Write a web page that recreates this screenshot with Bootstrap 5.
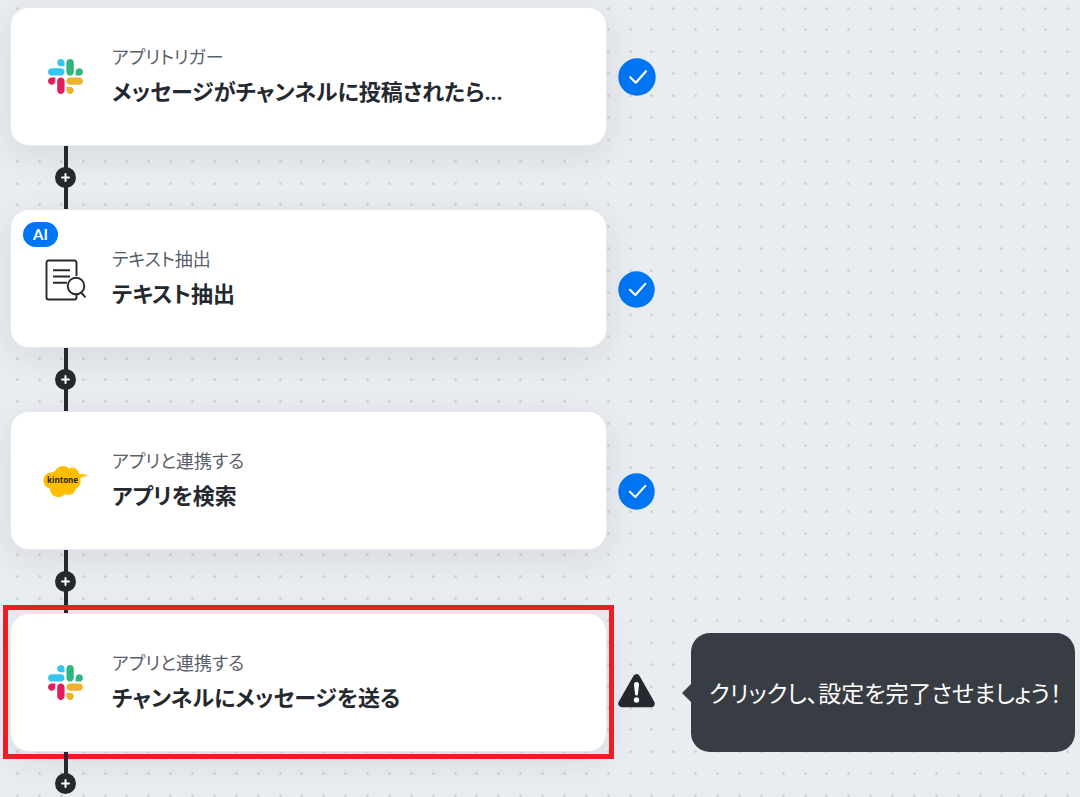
<!DOCTYPE html>
<html lang="ja">
<head>
<meta charset="utf-8">
<meta name="viewport" content="width=device-width, initial-scale=1">
<title>フロー編集</title>
<link href="https://cdn.jsdelivr.net/npm/bootstrap@5.3.0/dist/css/bootstrap.min.css" rel="stylesheet">
<style>
  :root { --ink: #24292f; --blue: #0075f2; --step-h: 139px; }
  body {
    font-family: "Noto Sans", "Noto Sans CJK JP", sans-serif;
    font-feature-settings: "palt";
    color: var(--ink);
    background-color: #e9ecf1;
    /* dot grid: eight dots per 175px tile */
    background-image: url("data:image/svg+xml,%3Csvg xmlns='http://www.w3.org/2000/svg' width='175' height='175'%3E%3Cdefs%3E%3Cpattern id='d' width='22' height='22' patternUnits='userSpaceOnUse'%3E%3Ccircle cx='11.5' cy='11.5' r='1.5' fill='%23cfd2d8'/%3E%3C/pattern%3E%3C/defs%3E%3Crect width='175' height='175' fill='url(%23d)'/%3E%3C/svg%3E");
    background-position: -60px 18px;
  }
  .flow { padding: 7px 5px 0 10px; }
  .step-card {
    flex: 0 1 597px;
    min-height: var(--step-h);
    border: 1px solid #e6e9ed;
    border-radius: 19px;
    box-shadow: 0 9px 35px rgba(36, 41, 47, .09);
    padding: 0 20px 0 31px;
  }
  .app-icon { width: 46px; }
  .step-text { margin-left: 24px; padding-bottom: 2px; }
  .step-label { font-size: 18px; line-height: 26px; color: #57606a; margin-bottom: 5px; }
  .step-title { font-size: 22px; line-height: 32px; font-weight: 600; margin-bottom: 0; }
  .ai-tag {
    position: absolute; top: 12px; left: 12px;
    width: 35px; height: 25px; line-height: 25px;
    font-family: Lato, sans-serif; font-size: 15px; font-weight: 700;
    background: var(--blue);
  }
  .focus-frame { position: absolute; inset: -9px -8px -8px -8px; border: 5px solid #ee1c25; }
  .state { width: 38px; margin-left: 11px; flex: none; }
  .state-low { padding-top: 22px; }
  .link-row { height: 63px; width: 21px; margin-left: 45px; }
  .link-row::before { content: ""; position: absolute; top: 0; bottom: 0; left: 9px; width: 4px; background: var(--ink); }
  .link-end { height: 42px; }
  .link-end::before { bottom: 16px; }
  .add-btn { width: 21px; height: 21px; background: var(--ink); }
  .hint {
    flex: 1 1 0; min-width: 0;
    margin-left: 35px; min-height: 119px; padding-left: 18px;
    border-radius: 19px; background: #383c43; color: #fff;
    font-size: 23px; line-height: 32px; top: 10px;
  }
  .hint::before {
    content: ""; position: absolute; left: -9px; top: 50%; margin-top: -9px;
    border: solid transparent; border-width: 9px 9px 9px 0; border-right-color: #383c43;
  }
</style>
</head>
<body>
<svg width="0" height="0" class="position-absolute" aria-hidden="true">
  <symbol id="slack" viewBox="0 0 122.8 122.8">
    <path fill="#e01e5a" d="M25.8 77.6c0 7.1-5.8 12.9-12.9 12.9S0 84.700 0 77.600s5.800-12.900 12.900-12.900h12.900zM32.300 77.600c0-7.100 5.800-12.900 12.900-12.900s12.900 5.800 12.900 12.900v32.300c0 7.100-5.800 12.900-12.900 12.900s-12.900-5.800-12.900-12.900z"/>
    <path fill="#36c5f0" d="M45.200 25.800c-7.100 0-12.900-5.800-12.900-12.900S38.100 0 45.200 0s12.900 5.800 12.900 12.900v12.900zM45.200 32.300c7.100 0 12.900 5.800 12.900 12.900s-5.800 12.900-12.900 12.900H12.900C5.800 58.100 0 52.300 0 45.200s5.800-12.900 12.900-12.900z"/>
    <path fill="#2eb67d" d="M97 45.200c0-7.100 5.800-12.900 12.900-12.900s12.900 5.800 12.900 12.900-5.800 12.900-12.900 12.900H97zM90.500 45.200c0 7.100-5.800 12.900-12.900 12.900s-12.900-5.800-12.900-12.900V12.900C64.700 5.800 70.500 0 77.600 0s12.900 5.800 12.900 12.900z"/>
    <path fill="#ecb22e" d="M77.600 97c7.100 0 12.900 5.800 12.900 12.900s-5.800 12.900-12.900 12.900-12.900-5.800-12.900-12.900V97zM77.600 90.500c-7.100 0-12.900-5.800-12.900-12.900s5.800-12.900 12.900-12.900h32.300c7.100 0 12.900 5.800 12.900 12.900s-5.800 12.900-12.900 12.900z"/>
  </symbol>
  <symbol id="done" viewBox="0 0 38 38">
    <circle cx="19" cy="19" r="18.700" fill="#0075f2"/>
    <path d="M12.200 19.200l5.600 5.500L28 13.200" fill="none" stroke="#fff" stroke-width="2.200" stroke-linecap="round" stroke-linejoin="round"/>
  </symbol>
  <symbol id="plus" viewBox="0 0 21 21">
    <path d="M10.500 7v7M7 10.500h7" stroke="#fff" stroke-width="2" stroke-linecap="round"/>
  </symbol>
</svg>

<main class="flow">
  <section class="d-flex align-items-center">
    <article class="step-card bg-white d-flex align-items-center position-relative">
      <div class="app-icon text-center"><svg width="35" height="35" role="img" aria-label="Slack"><use href="#slack"/></svg></div>
      <div class="step-text">
        <p class="step-label">アプリトリガー</p>
        <h2 class="step-title">メッセージがチャンネルに投稿されたら...</h2>
      </div>
    </article>
    <div class="state"><svg class="d-block" width="38" height="38" role="img" aria-label="完了"><use href="#done"/></svg></div>
  </section>
  <div class="link-row position-relative d-flex align-items-center">
    <button type="button" class="add-btn btn p-0 border-0 rounded-circle position-relative d-flex" aria-label="追加"><svg width="21" height="21"><use href="#plus"/></svg></button>
  </div>

  <section class="d-flex align-items-center">
    <article class="step-card bg-white d-flex align-items-center position-relative">
      <span class="ai-tag rounded-pill text-white text-center">AI</span>
      <div class="app-icon text-center">
        <svg width="44" height="44" viewBox="-2 -2 44 44" fill="none" stroke="#24292f" stroke-width="1.900" role="img" aria-label="テキスト抽出">
          <path d="M31.500 17V3.500a2 2 0 0 0-2-2h-26a2 2 0 0 0-2 2v35a2 2 0 0 0 2 2h26a2 2 0 0 0 2-2V35"/>
          <path d="M8 11.200h17M8 17.500h17M8 23.800h14"/>
          <circle cx="31" cy="27" r="8.300"/><path d="M36 33.500l4.500 4.800"/>
        </svg>
      </div>
      <div class="step-text">
        <p class="step-label">テキスト抽出</p>
        <h2 class="step-title">テキスト抽出</h2>
      </div>
    </article>
    <div class="state state-low"><svg class="d-block" width="37" height="37" role="img" aria-label="完了"><use href="#done"/></svg></div>
  </section>
  <div class="link-row position-relative d-flex align-items-center">
    <button type="button" class="add-btn btn p-0 border-0 rounded-circle position-relative d-flex" aria-label="追加"><svg width="21" height="21"><use href="#plus"/></svg></button>
  </div>

  <section class="d-flex align-items-center">
    <article class="step-card bg-white d-flex align-items-center position-relative">
      <div class="app-icon text-center">
        <svg width="46" height="34" viewBox="-1 -1 46 34" role="img" aria-label="kintone">
          <path fill="#ffbf00" d="M7 23.500C2.500 22.500.5 19 .5 15.500.5 10.500 4 7 9 7.500 11 6.500 12 6.500 12.500 5.500 14 2.500 17 1 20 1c2.500 0 4.500 1 6 2.500 4.500-2 9.500.5 10 5.500 3-.2 5.500-.3 9 1.500-2.500.8-5 .8-7.500 2.500.8 6-1.500 9.500-4.500 10.500-1.500 5.500-6 8-11 5.500-2 2.500-5 3.500-8 3-4-.7-7-4-7-8.500z"/>
          <text x="4" y="18" font-family="Open Sans, sans-serif" font-weight="700" font-size="8" fill="#24211c">kintone</text>
        </svg>
      </div>
      <div class="step-text">
        <p class="step-label">アプリと連携する</p>
        <h2 class="step-title">アプリを検索</h2>
      </div>
    </article>
    <div class="state state-low"><svg class="d-block" width="37" height="37" role="img" aria-label="完了"><use href="#done"/></svg></div>
  </section>
  <div class="link-row position-relative d-flex align-items-center">
    <button type="button" class="add-btn btn p-0 border-0 rounded-circle position-relative d-flex" aria-label="追加"><svg width="21" height="21"><use href="#plus"/></svg></button>
  </div>

  <section class="d-flex align-items-center">
    <article class="step-card bg-white d-flex align-items-center position-relative">
      <span class="focus-frame"></span>
      <div class="app-icon text-center"><svg width="35" height="35" role="img" aria-label="Slack"><use href="#slack"/></svg></div>
      <div class="step-text">
        <p class="step-label">アプリと連携する</p>
        <h2 class="step-title">チャンネルにメッセージを送る</h2>
      </div>
    </article>
    <div class="state pt-3">
      <svg class="d-block" width="37" height="34" viewBox="0 0 37 34" role="img" aria-label="警告">
        <path d="M18.500 4L4 29.500h29z" fill="#24292f" stroke="#24292f" stroke-width="7.500" stroke-linejoin="round"/>
        <path d="M16 10.500a2.500 2.500 0 0 1 5 0l-1 9.500a1.500 1.500 0 0 1-3 0z" fill="#fff"/><circle cx="18.500" cy="26" r="2.700" fill="#fff"/>
      </svg>
    </div>
    <div class="hint position-relative d-flex align-items-center" role="tooltip">クリックし、設定を完了させましょう！</div>
  </section>
  <div class="link-row link-end position-relative d-flex align-items-end">
    <button type="button" class="add-btn btn p-0 border-0 rounded-circle position-relative d-flex" aria-label="追加"><svg width="21" height="21"><use href="#plus"/></svg></button>
  </div>
</main>
<script src="https://cdn.jsdelivr.net/npm/bootstrap@5.3.0/dist/js/bootstrap.bundle.min.js"></script>
</body>
</html>
